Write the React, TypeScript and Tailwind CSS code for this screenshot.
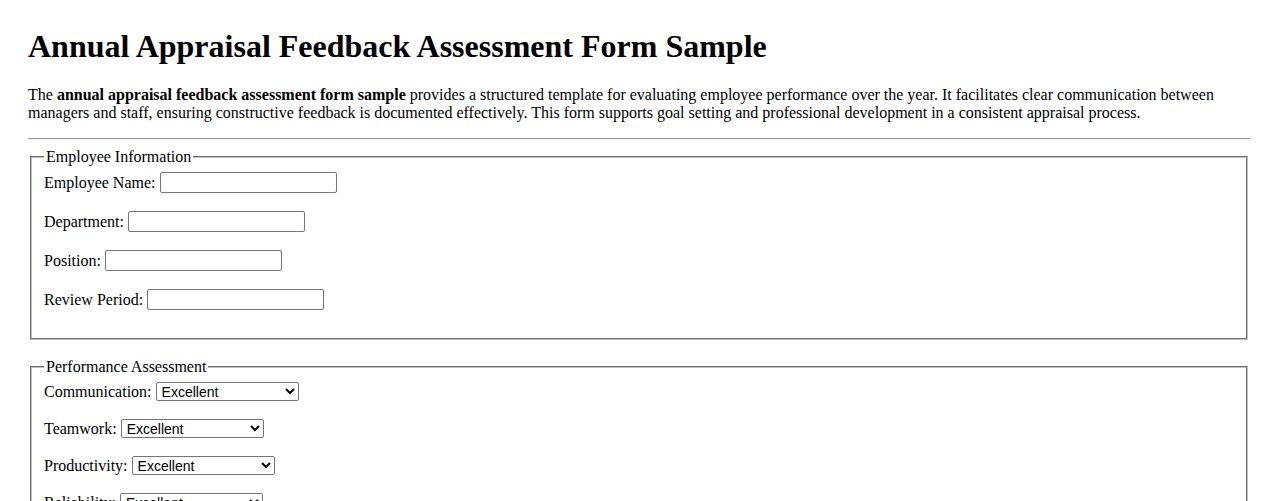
import React from 'react';

const EMPLOYEE_FIELDS = ['Employee Name', 'Department', 'Position', 'Review Period'];
const RATED = ['Communication', 'Teamwork', 'Productivity', 'Reliability', 'Initiative'];
const RATINGS = ['Excellent', 'Good', 'Satisfactory', 'Needs Improvement', 'Unsatisfactory'];

const control = "font-['Liberation_Sans',Arial,sans-serif] text-black border border-[#767676] rounded-[2px] bg-white";

const App: React.FC = () => {
  return (
    <div className="min-h-screen bg-white text-black px-[28px] pt-[28px] pb-[28px] font-['Liberation_Serif','Times_New_Roman',serif] text-[16px] leading-[18px]">
      <h1 className="text-[32px] leading-[37px] font-bold mb-[21px]">Annual Appraisal Feedback Assessment Form Sample</h1>

      <p className="mb-[16px]">
        The <b>annual appraisal feedback assessment form sample</b> provides a structured template for evaluating employee
        performance over the year. It facilitates clear communication between managers and staff, ensuring constructive
        feedback is documented effectively. This form supports goal setting and professional development in a consistent
        appraisal process.
      </p>

      <hr className="border-t border-b border-t-[#9a9a9a] border-b-[#eeeeee] mb-[8px]" />

      <form>
        {/* Employee details */}
        <fieldset className="mx-[2px] border-2 [border-style:groove] border-[#c0c0c0] px-[12px] pb-[10px]">
          <legend className="px-[2px] leading-[18px]">Employee Information</legend>
          <div className="pt-[6px]">
            {EMPLOYEE_FIELDS.map(f => (
              <div key={f} className="flex items-center gap-[4px] h-[21px] mb-[18px]">
                <label>{f}:</label>
                <input type="text" className={`${control} text-[13.33px] w-[177px] h-[21px] px-[2px]`} />
              </div>
            ))}
          </div>
        </fieldset>

        {/* Ratings */}
        <fieldset className="mx-[2px] mt-[18px] border-2 [border-style:groove] border-[#c0c0c0] px-[12px] pb-[10px]">
          <legend className="px-[2px] leading-[18px]">Performance Assessment</legend>
          <div className="pt-[6px]">
            {RATED.map(r => (
              <div key={r} className="flex items-center gap-[4px] h-[19px] mb-[18px]">
                <label>{r}:</label>
                <select className={`${control} text-[14px] w-[143px] h-[19px] pl-[1px]`} defaultValue="Excellent">
                  {RATINGS.map(o => <option key={o}>{o}</option>)}
                </select>
              </div>
            ))}
          </div>
        </fieldset>
      </form>
    </div>
  );
};

export default App;
